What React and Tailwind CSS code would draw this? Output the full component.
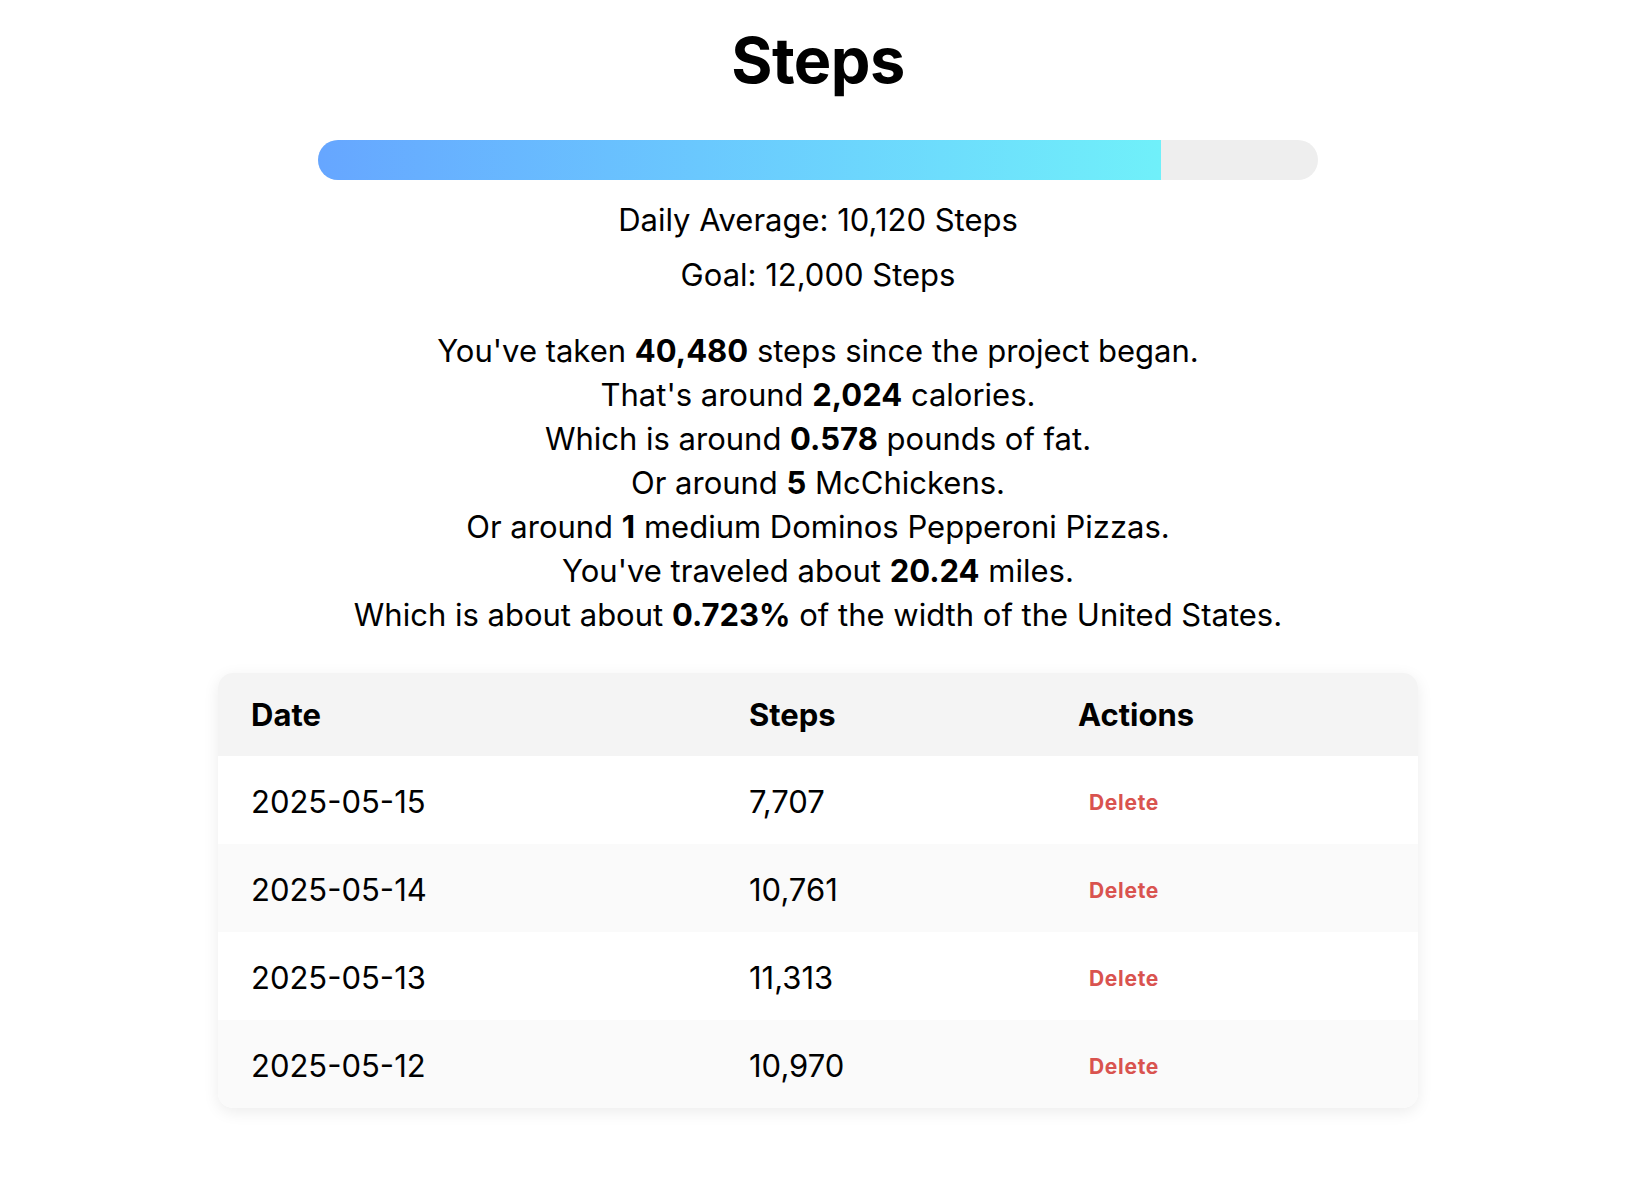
import React from 'react'

const entries = [
  { date: '2025-05-15', steps: 7707 },
  { date: '2025-05-14', steps: 10761 },
  { date: '2025-05-13', steps: 11313 },
  { date: '2025-05-12', steps: 10970 },
]

const goal = 12000
const average = 10120

export default function App() {
  const pct = (average / goal) * 100

  return (
    <div className="min-h-screen bg-white text-black font-['Inter','Liberation_Sans',sans-serif]">
      <div className="flex flex-col items-center pt-[22px]">
        <h1 className="text-[63px] font-bold leading-[76px] tracking-[-0.5px]">Steps</h1>

        {/* progress */}
        <div className="mt-[42px] w-[1000px] h-[40px] rounded-full bg-[#eeeeee] overflow-hidden">
          <div
            className="h-full bg-gradient-to-r from-[#66a6ff] to-[#70f0fa]"
            style={{ width: `${pct}%` }}
          />
        </div>

        <p className="mt-[20px] text-[31px] leading-[40px]">Daily Average: 10,120 Steps</p>
        <p className="mt-[15px] text-[31px] leading-[40px]">Goal: 12,000 Steps</p>

        <div className="mt-[34px] text-[31px] leading-[44px] text-center">
          <p>You've taken <b>40,480</b> steps since the project began.</p>
          <p>That's around <b>2,024</b> calories.</p>
          <p>Which is around <b>0.578</b> pounds of fat.</p>
          <p>Or around <b>5</b> McChickens.</p>
          <p>Or around <b>1</b> medium Dominos Pepperoni Pizzas.</p>
          <p>You've traveled about <b>20.24</b> miles.</p>
          <p>Which is about about <b>0.723%</b> of the width of the United States.</p>
        </div>

        {/* table */}
        <div className="mt-[36px] w-[1200px] rounded-[15px] overflow-hidden shadow-[0_4px_16px_rgba(0,0,0,0.08)]">
          <table className="w-full border-collapse text-left">
            <thead>
              <tr className="bg-[#f4f4f4] h-[83px]">
                <th className="w-[498px] pl-[33px] pt-[2px] text-[31px] font-bold">Date</th>
                <th className="w-[329px] pl-[33px] pt-[2px] text-[31px] font-bold">Steps</th>
                <th className="pl-[33px] pt-[2px] text-[31px] font-bold">Actions</th>
              </tr>
            </thead>
            <tbody>
              {entries.map((e, i) => (
                <tr key={e.date} className={`h-[88px] ${i % 2 === 1 ? 'bg-[#fafafa]' : 'bg-white'}`}>
                  <td className="pl-[33px] pt-[5px] text-[31px]">{e.date}</td>
                  <td className="pl-[33px] pt-[5px] text-[31px]">{e.steps.toLocaleString('en-US')}</td>
                  <td className="pl-[33px] pt-[5px]">
                    <button className="px-[11px] py-[6px] text-[21px] font-bold text-[#d9534f] tracking-[0.7px]">
                      Delete
                    </button>
                  </td>
                </tr>
              ))}
            </tbody>
          </table>
        </div>
      </div>
    </div>
  )
}
